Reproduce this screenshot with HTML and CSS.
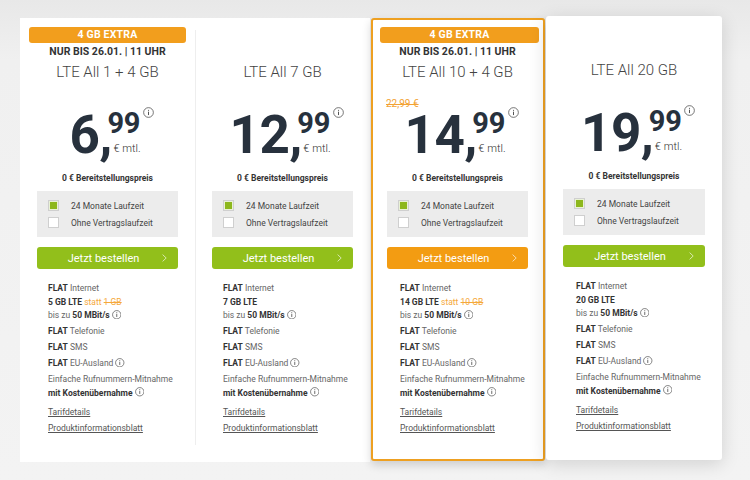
FILE: index.html
```html
<!DOCTYPE html>
<html lang="de">
<head>
<meta charset="utf-8">
<title>LTE All Tarife</title>
<link rel="stylesheet" href="styles.css">
</head>
<body>
<div class="page">
  <div class="panel">
    <div class="card card--first">
      <div class="banner">4 GB EXTRA</div>
      <div class="deadline">NUR BIS 26.01. | 11 UHR</div>
      <div class="title">LTE All 1 + 4 GB</div>
      <div class="old-price"></div>
      <div class="price">
        <span class="price__main">6<span class="price__comma">,</span></span>
        <span class="price__side">
          <span class="price__cents">99</span>
          <span class="price__unit">€ mtl.</span>
          <svg class="price__info" viewBox="0 0 12 12"><circle cx="6" cy="6" r="5.3" fill="none" stroke="currentColor" stroke-width="0.8"/><path d="M6 5.1v3.7" stroke="currentColor" stroke-width="1"/><circle cx="6" cy="3.5" r="0.6" fill="currentColor"/></svg>
        </span>
      </div>
      <div class="setup">0 € Bereitstellungspreis</div>
      <div class="options">
        <div class="option"><span class="check check--on"></span>24 Monate Laufzeit</div>
        <div class="option"><span class="check"></span>Ohne Vertragslaufzeit</div>
      </div>
      <a class="btn" href="#"><span class="btn__label">Jetzt bestellen</span><svg class="btn__chev" viewBox="0 0 5 8"><path d="M0.6 0.6L4.2 4L0.6 7.4" fill="none" stroke="currentColor" stroke-width="0.8"/></svg></a>
      <ul class="features">
        <li><b>FLAT</b> Internet<br><b>5 GB LTE</b> <span class="hint">statt <s>1 GB</s></span><br>bis zu <b>50 MBit/s</b> <svg class="ii" viewBox="0 0 12 12"><circle cx="6" cy="6" r="5.3" fill="none" stroke="currentColor" stroke-width="0.9"/><path d="M6 5.1v3.7" stroke="currentColor" stroke-width="1.1"/><circle cx="6" cy="3.5" r="0.7" fill="currentColor"/></svg></li>
        <li><b>FLAT</b> Telefonie</li>
        <li><b>FLAT</b> SMS</li>
        <li><b>FLAT</b> EU-Ausland <svg class="ii" viewBox="0 0 12 12"><circle cx="6" cy="6" r="5.3" fill="none" stroke="currentColor" stroke-width="0.9"/><path d="M6 5.1v3.7" stroke="currentColor" stroke-width="1.1"/><circle cx="6" cy="3.5" r="0.7" fill="currentColor"/></svg></li>
        <li>Einfache Rufnummern-Mitnahme<br><b>mit Kostenübernahme</b> <svg class="ii" viewBox="0 0 12 12"><circle cx="6" cy="6" r="5.3" fill="none" stroke="currentColor" stroke-width="0.9"/><path d="M6 5.1v3.7" stroke="currentColor" stroke-width="1.1"/><circle cx="6" cy="3.5" r="0.7" fill="currentColor"/></svg></li>
      </ul>
      <div class="links"><a href="#">Tarifdetails</a><a href="#">Produktinformationsblatt</a></div>
    </div>
    <div class="divider"></div>
    <div class="card card--second">
      <div class="promo-space"></div>
      <div class="title">LTE All 7 GB</div>
      <div class="old-price"></div>
      <div class="price">
        <span class="price__main">12<span class="price__comma">,</span></span>
        <span class="price__side">
          <span class="price__cents">99</span>
          <span class="price__unit">€ mtl.</span>
          <svg class="price__info" viewBox="0 0 12 12"><circle cx="6" cy="6" r="5.3" fill="none" stroke="currentColor" stroke-width="0.8"/><path d="M6 5.1v3.7" stroke="currentColor" stroke-width="1"/><circle cx="6" cy="3.5" r="0.6" fill="currentColor"/></svg>
        </span>
      </div>
      <div class="setup">0 € Bereitstellungspreis</div>
      <div class="options">
        <div class="option"><span class="check check--on"></span>24 Monate Laufzeit</div>
        <div class="option"><span class="check"></span>Ohne Vertragslaufzeit</div>
      </div>
      <a class="btn" href="#"><span class="btn__label">Jetzt bestellen</span><svg class="btn__chev" viewBox="0 0 5 8"><path d="M0.6 0.6L4.2 4L0.6 7.4" fill="none" stroke="currentColor" stroke-width="0.8"/></svg></a>
      <ul class="features">
        <li><b>FLAT</b> Internet<br><b>7 GB LTE</b><br>bis zu <b>50 MBit/s</b> <svg class="ii" viewBox="0 0 12 12"><circle cx="6" cy="6" r="5.3" fill="none" stroke="currentColor" stroke-width="0.9"/><path d="M6 5.1v3.7" stroke="currentColor" stroke-width="1.1"/><circle cx="6" cy="3.5" r="0.7" fill="currentColor"/></svg></li>
        <li><b>FLAT</b> Telefonie</li>
        <li><b>FLAT</b> SMS</li>
        <li><b>FLAT</b> EU-Ausland <svg class="ii" viewBox="0 0 12 12"><circle cx="6" cy="6" r="5.3" fill="none" stroke="currentColor" stroke-width="0.9"/><path d="M6 5.1v3.7" stroke="currentColor" stroke-width="1.1"/><circle cx="6" cy="3.5" r="0.7" fill="currentColor"/></svg></li>
        <li>Einfache Rufnummern-Mitnahme<br><b>mit Kostenübernahme</b> <svg class="ii" viewBox="0 0 12 12"><circle cx="6" cy="6" r="5.3" fill="none" stroke="currentColor" stroke-width="0.9"/><path d="M6 5.1v3.7" stroke="currentColor" stroke-width="1.1"/><circle cx="6" cy="3.5" r="0.7" fill="currentColor"/></svg></li>
      </ul>
      <div class="links"><a href="#">Tarifdetails</a><a href="#">Produktinformationsblatt</a></div>
    </div>
  </div>

  <div class="card card--hl">
    <div class="banner">4 GB EXTRA</div>
    <div class="deadline">NUR BIS 26.01. | 11 UHR</div>
    <div class="title">LTE All 10 + 4 GB</div>
    <div class="old-price"><s>22,99 €</s></div>
    <div class="price">
      <span class="price__main">14<span class="price__comma">,</span></span>
      <span class="price__side">
        <span class="price__cents">99</span>
        <span class="price__unit">€ mtl.</span>
        <svg class="price__info" viewBox="0 0 12 12"><circle cx="6" cy="6" r="5.3" fill="none" stroke="currentColor" stroke-width="0.8"/><path d="M6 5.1v3.7" stroke="currentColor" stroke-width="1"/><circle cx="6" cy="3.5" r="0.6" fill="currentColor"/></svg>
      </span>
    </div>
    <div class="setup">0 € Bereitstellungspreis</div>
    <div class="options">
      <div class="option"><span class="check check--on"></span>24 Monate Laufzeit</div>
      <div class="option"><span class="check"></span>Ohne Vertragslaufzeit</div>
    </div>
    <a class="btn btn--orange" href="#"><span class="btn__label">Jetzt bestellen</span><svg class="btn__chev" viewBox="0 0 5 8"><path d="M0.6 0.6L4.2 4L0.6 7.4" fill="none" stroke="currentColor" stroke-width="0.8"/></svg></a>
    <ul class="features">
      <li><b>FLAT</b> Internet<br><b>14 GB LTE</b> <span class="hint">statt <s>10 GB</s></span><br>bis zu <b>50 MBit/s</b> <svg class="ii" viewBox="0 0 12 12"><circle cx="6" cy="6" r="5.3" fill="none" stroke="currentColor" stroke-width="0.9"/><path d="M6 5.1v3.7" stroke="currentColor" stroke-width="1.1"/><circle cx="6" cy="3.5" r="0.7" fill="currentColor"/></svg></li>
      <li><b>FLAT</b> Telefonie</li>
      <li><b>FLAT</b> SMS</li>
      <li><b>FLAT</b> EU-Ausland <svg class="ii" viewBox="0 0 12 12"><circle cx="6" cy="6" r="5.3" fill="none" stroke="currentColor" stroke-width="0.9"/><path d="M6 5.1v3.7" stroke="currentColor" stroke-width="1.1"/><circle cx="6" cy="3.5" r="0.7" fill="currentColor"/></svg></li>
      <li>Einfache Rufnummern-Mitnahme<br><b>mit Kostenübernahme</b> <svg class="ii" viewBox="0 0 12 12"><circle cx="6" cy="6" r="5.3" fill="none" stroke="currentColor" stroke-width="0.9"/><path d="M6 5.1v3.7" stroke="currentColor" stroke-width="1.1"/><circle cx="6" cy="3.5" r="0.7" fill="currentColor"/></svg></li>
    </ul>
    <div class="links"><a href="#">Tarifdetails</a><a href="#">Produktinformationsblatt</a></div>
  </div>

  <div class="card card--raised">
    <div class="promo-space"></div>
    <div class="title">LTE All 20 GB</div>
    <div class="old-price"></div>
    <div class="price">
      <span class="price__main">19<span class="price__comma">,</span></span>
      <span class="price__side">
        <span class="price__cents">99</span>
        <span class="price__unit">€ mtl.</span>
        <svg class="price__info" viewBox="0 0 12 12"><circle cx="6" cy="6" r="5.3" fill="none" stroke="currentColor" stroke-width="0.8"/><path d="M6 5.1v3.7" stroke="currentColor" stroke-width="1"/><circle cx="6" cy="3.5" r="0.6" fill="currentColor"/></svg>
      </span>
    </div>
    <div class="setup">0 € Bereitstellungspreis</div>
    <div class="options">
      <div class="option"><span class="check check--on"></span>24 Monate Laufzeit</div>
      <div class="option"><span class="check"></span>Ohne Vertragslaufzeit</div>
    </div>
    <a class="btn" href="#"><span class="btn__label">Jetzt bestellen</span><svg class="btn__chev" viewBox="0 0 5 8"><path d="M0.6 0.6L4.2 4L0.6 7.4" fill="none" stroke="currentColor" stroke-width="0.8"/></svg></a>
    <ul class="features">
      <li><b>FLAT</b> Internet<br><b>20 GB LTE</b><br>bis zu <b>50 MBit/s</b> <svg class="ii" viewBox="0 0 12 12"><circle cx="6" cy="6" r="5.3" fill="none" stroke="currentColor" stroke-width="0.9"/><path d="M6 5.1v3.7" stroke="currentColor" stroke-width="1.1"/><circle cx="6" cy="3.5" r="0.7" fill="currentColor"/></svg></li>
      <li><b>FLAT</b> Telefonie</li>
      <li><b>FLAT</b> SMS</li>
      <li><b>FLAT</b> EU-Ausland <svg class="ii" viewBox="0 0 12 12"><circle cx="6" cy="6" r="5.3" fill="none" stroke="currentColor" stroke-width="0.9"/><path d="M6 5.1v3.7" stroke="currentColor" stroke-width="1.1"/><circle cx="6" cy="3.5" r="0.7" fill="currentColor"/></svg></li>
      <li>Einfache Rufnummern-Mitnahme<br><b>mit Kostenübernahme</b> <svg class="ii" viewBox="0 0 12 12"><circle cx="6" cy="6" r="5.3" fill="none" stroke="currentColor" stroke-width="0.9"/><path d="M6 5.1v3.7" stroke="currentColor" stroke-width="1.1"/><circle cx="6" cy="3.5" r="0.7" fill="currentColor"/></svg></li>
    </ul>
    <div class="links"><a href="#">Tarifdetails</a><a href="#">Produktinformationsblatt</a></div>
  </div>
</div>
</body>
</html>
```
FILE: styles.css
```css
html, body {
  margin: 0;
  padding: 0;
}
body {
  background: linear-gradient(#e8e8e8 0, #f0f0f0 60px, #f3f3f3 100%);
  font-family: Roboto, "Liberation Sans", Arial, sans-serif;
  color: #666;
  width: 750px;
  height: 480px;
  overflow: hidden;
}
.page {
  display: flex;
  align-items: flex-start;
  padding: 18px 0 0 20px;
}
.panel {
  display: flex;
  background: #fff;
  border-radius: 3px;
  height: 444px;
}
.divider {
  width: 1px;
  background: #eeeeee;
  margin: 12px 0 17px;
}
.card {
  box-sizing: border-box;
  width: 175px;
  padding: 9px 17px 0;
  text-align: center;
  background: #fff;
}
.card--second {
  width: 174px;
  padding: 9px 17px 0 16px;
}
.card--hl {
  width: 174px;
  height: 443px;
  margin-left: 1px;
  border: 2px solid #eea021;
  border-radius: 3px;
  padding: 7px 15px 0 14px;
  box-shadow: 0 4px 10px rgba(0, 0, 0, 0.16);
}
.card--raised {
  width: 176px;
  height: 444px;
  margin: -2px 0 0 1px;
  border-radius: 3px;
  box-shadow: 0 4px 18px rgba(0, 0, 0, 0.14);
}

.banner {
  height: 16px;
  line-height: 16px;
  margin: 0 -8px;
  border-radius: 3px;
  background: #f29e1d;
  color: #fff;
  font-size: 10.5px;
  font-weight: 700;
  letter-spacing: 0.2px;
}
.card--hl .banner {
  margin: 0 -11px 0 -7px;
}
.deadline {
  margin-top: 2px;
  height: 14px;
  line-height: 14px;
  font-size: 10.5px;
  font-weight: 700;
  color: #333;
}
.promo-space {
  height: 32px;
}
.title {
  margin-top: 3px;
  height: 20px;
  line-height: 20px;
  font-size: 15px;
  font-weight: 300;
  color: #444;
}
.old-price {
  margin-top: 16px;
  height: 11px;
  line-height: 11px;
  font-size: 10px;
  text-align: left;
  color: #f3a233;
  margin-left: -1px;
}
.old-price s {
  text-decoration-thickness: 1px;
}
.price {
  display: flex;
  justify-content: center;
  align-items: flex-start;
  height: 53px;
  padding-right: 5px;
  color: #27313d;
  font-weight: 700;
}
.price__main {
  font-size: 53px;
  line-height: 1;
  letter-spacing: -0.5px;
}
.price__comma {
  letter-spacing: -5px;
}
.price__side {
  position: relative;
  display: flex;
  flex-direction: column;
  align-items: flex-start;
}
.price__cents {
  font-size: 29px;
  line-height: 1;
  letter-spacing: -0.3px;
}
.price__unit {
  margin: 5px 0 0 6px;
  font-size: 11px;
  line-height: 11px;
  font-weight: 300;
  color: #333;
}
.price__info {
  position: absolute;
  top: -2px;
  right: -13px;
  width: 11px;
  height: 11px;
  color: #444;
}
.setup {
  margin-top: 10px;
  line-height: 12px;
  font-size: 8.5px;
  font-weight: 700;
  color: #333;
}
.options {
  box-sizing: border-box;
  margin-top: 7px;
  height: 46px;
  padding: 9px 11px;
  background: #ececec;
  display: flex;
  flex-direction: column;
  gap: 6px;
  text-align: left;
}
.option {
  display: flex;
  align-items: center;
  gap: 12px;
  height: 11px;
  font-size: 8.5px;
  color: #444;
}
.check {
  box-sizing: border-box;
  width: 11px;
  height: 11px;
  border: 1px solid #cfcfcf;
  background: #fff;
  flex: none;
}
.check--on {
  background: #8db71c;
  box-shadow: inset 0 0 0 1px #e9f2d4;
}
.btn {
  display: grid;
  grid-template-columns: 1fr 5px;
  align-items: center;
  margin-top: 10px;
  height: 22px;
  padding: 0 11px 0 8px;
  border-radius: 3px;
  background: #92bf1b;
  color: #fff;
  text-decoration: none;
  font-size: 11px;
}
.btn--orange {
  background: #f39c12;
}
.btn__label {
  text-align: center;
}
.btn__chev {
  width: 5px;
  height: 8px;
  color: rgba(255, 255, 255, 0.8);
}
.features {
  list-style: none;
  margin: 13px 0 0;
  padding: 0 0 0 11px;
  text-align: left;
  font-size: 8.5px;
  line-height: 13.5px;
  color: #666;
}
.features li {
  margin-bottom: 2.5px;
}
.features b {
  color: #333;
}
.hint {
  color: #f5a83a;
}
.ii {
  width: 9.5px;
  height: 9.5px;
  vertical-align: -1px;
  color: #555;
}
.links {
  display: flex;
  flex-direction: column;
  align-items: flex-start;
  margin-top: 5px;
  padding-left: 11px;
  font-size: 8.5px;
  line-height: 15.5px;
}
.links a {
  color: #555;
  text-decoration: underline;
}
.card--raised .features,
.card--raised .links,
.card--hl .features,
.card--hl .links {
  padding-left: 13px;
}
```
